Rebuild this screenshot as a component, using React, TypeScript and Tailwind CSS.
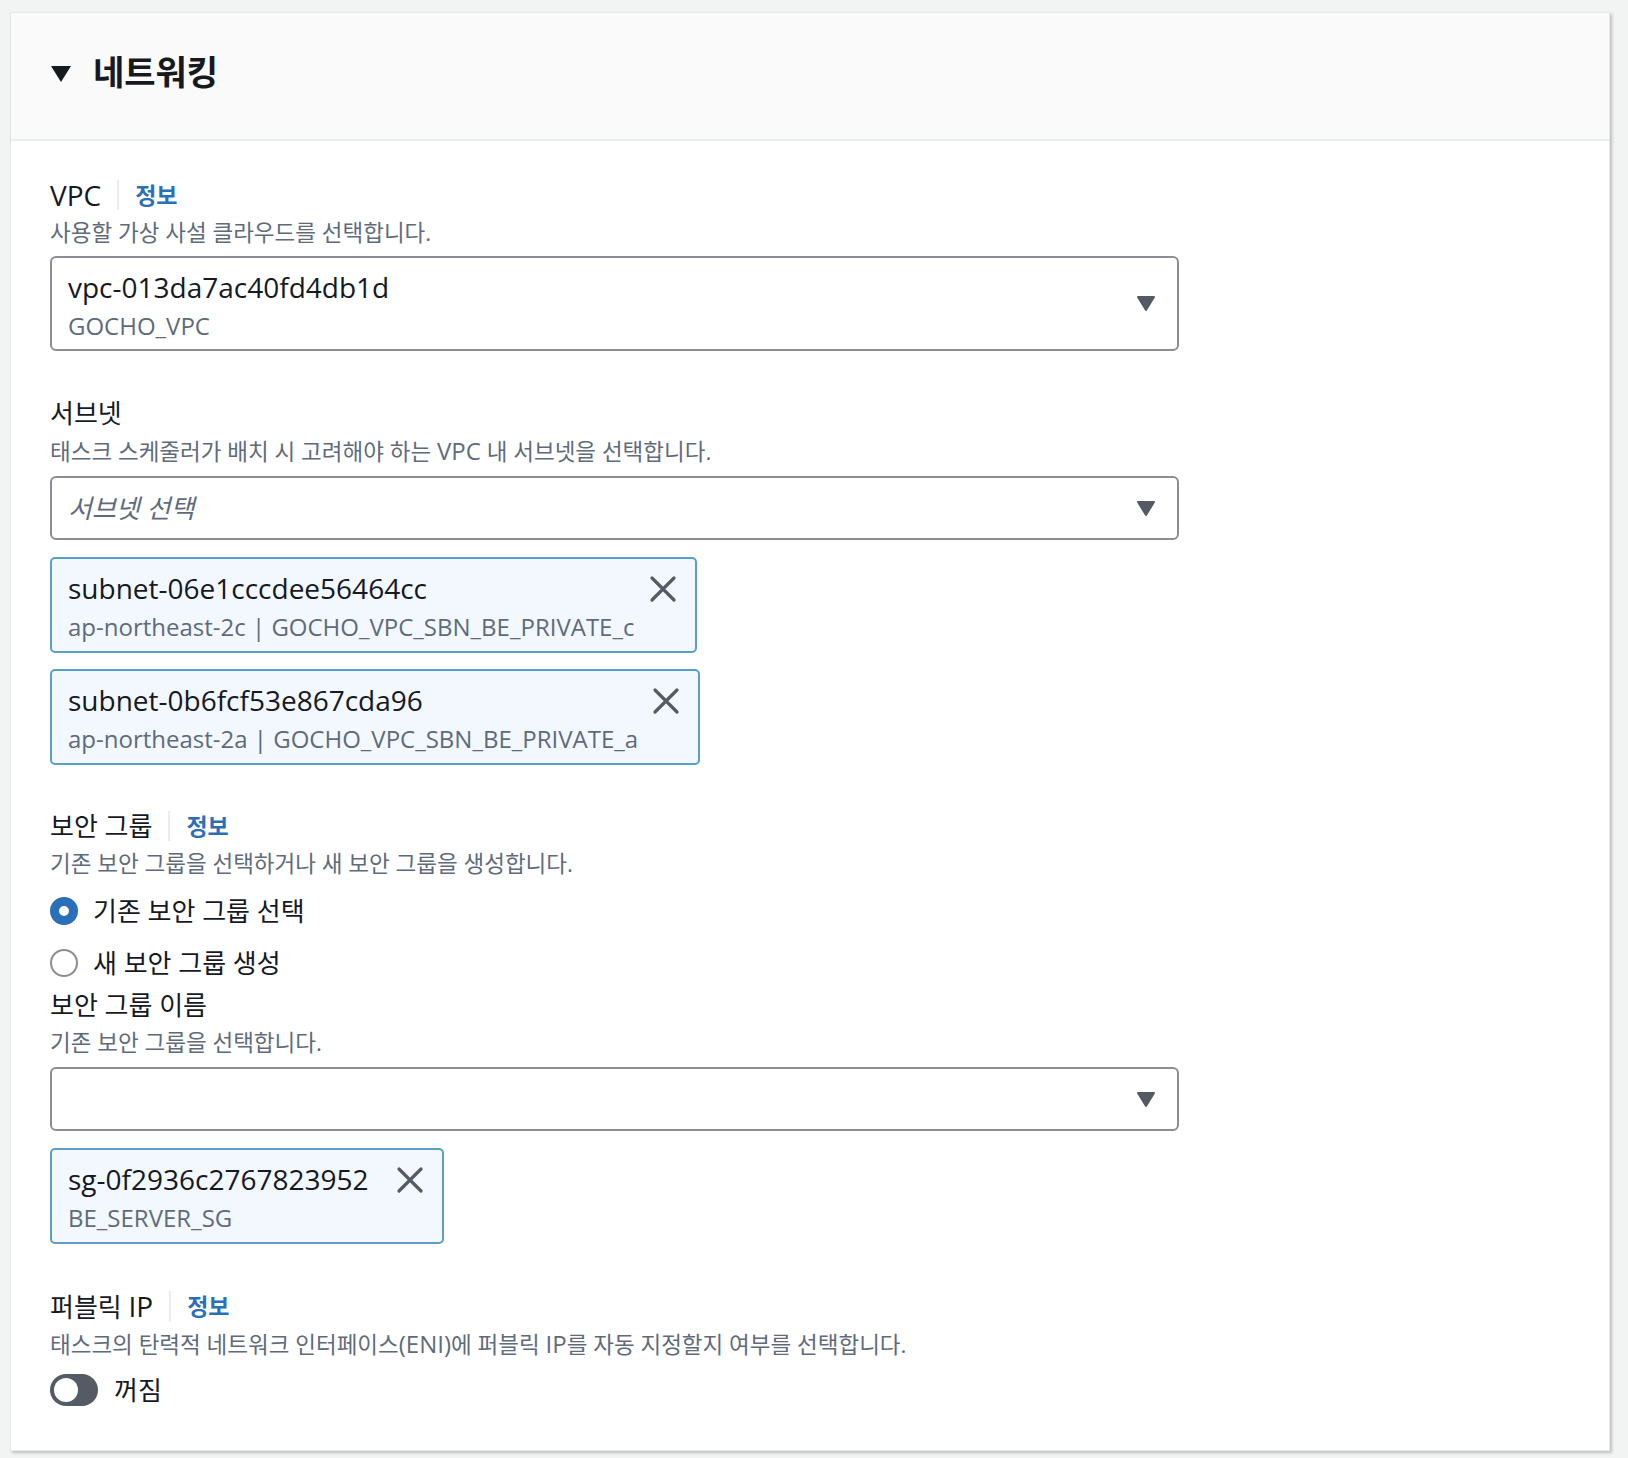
import React from 'react';

const FONT = { fontFamily: '"Open Sans", "Noto Sans CJK KR", sans-serif' };

const Caret: React.FC = () => (
  <svg width="20" height="17" viewBox="0 0 20 17" className="shrink-0">
    <path d="M2 2h16L10 15z" fill="#545b64" stroke="#545b64" strokeWidth="2" strokeLinejoin="round" />
  </svg>
);

const Close: React.FC = () => (
  <svg width="28" height="28" viewBox="0 0 28 28" className="shrink-0">
    <path d="M3 3L25 25M25 3L3 25" stroke="#545b64" strokeWidth="3.2" strokeLinecap="round" />
  </svg>
);

const Info: React.FC = () => (
  <>
    <span className="mx-[16px] w-[2px] h-[30px] bg-[#eaeded]" />
    <span className="text-[23px] font-bold text-[#2a6fb8] cursor-pointer">정보</span>
  </>
);

const Label: React.FC<{ children: React.ReactNode; info?: boolean; className?: string }> = ({ children, info, className = '' }) => (
  <div className={`flex items-center h-[32px] text-[26px] leading-[32px] text-[#16191f] ${className}`}>
    <span>{children}</span>
    {info && <Info />}
  </div>
);

const Desc: React.FC<{ children: React.ReactNode }> = ({ children }) => (
  <p className="mt-[7px] text-[22.5px] leading-[30px] text-[#5f6b7a] whitespace-nowrap">{children}</p>
);

const Chip: React.FC<{ id: string; sub: string; width: string; className?: string }> = ({ id, sub, width, className = '' }) => (
  <div className={`flex items-start justify-between ${width} h-[96px] border-2 border-[#5a9fc7] bg-[#f2f8fd] rounded-[5px] pl-[16px] pr-[18px] pt-[11px] ${className}`}>
    <div className="flex flex-col whitespace-nowrap">
      <span className="text-[28px] leading-[36px] text-[#16191f]">{id}</span>
      <span className="mt-[4px] text-[24px] leading-[34px] text-[#5f6b7a]">{sub}</span>
    </div>
    <div className="pt-[5px]">
      <Close />
    </div>
  </div>
);

const App: React.FC = () => {
  return (
    <div className="w-[1628px] h-[1458px] bg-[#f2f3f3] pt-[12px] pl-[10px]" style={FONT}>
      <div className="w-[1600px] h-[1439px] bg-white border border-[#e6e7e8] shadow-[2px_2px_3px_rgba(0,0,0,0.22)]">
        {/* Header */}
        <div className="flex items-center h-[128px] bg-[#fafafa] border-b-2 border-[#eaeded] pl-[39px] pb-[9px]">
          <svg width="22" height="18" viewBox="0 0 22 18" className="mr-[21px] mt-[4px]">
            <path d="M1 1h20L11 17z" fill="#16191f" />
          </svg>
          <h2 className="text-[34px] font-bold leading-[40px] text-[#16191f]">네트워킹</h2>
        </div>

        <div className="pl-[39px] pt-[38px]">
          {/* VPC */}
          <Label info>
            <span className="text-[28px]">VPC</span>
          </Label>
          <Desc>사용할 가상 사설 클라우드를 선택합니다.</Desc>
          <div className="mt-[8px] w-[1129px] h-[95px] border-2 border-[#8c8c94] rounded-[6px] flex items-center justify-between pl-[16px] pr-[21px]">
            <div className="flex flex-col pt-[4px]">
              <span className="text-[28px] leading-[36px] text-[#16191f]">vpc-013da7ac40fd4db1d</span>
              <span className="mt-[4px] text-[24px] leading-[34px] text-[#5f6b7a]">GOCHO_VPC</span>
            </div>
            <Caret />
          </div>

          {/* Subnets */}
          <Label className="mt-[46px]">서브넷</Label>
          <Desc>
            태스크 스케줄러가 배치 시 고려해야 하는 <span className="text-[24px]">VPC</span> 내 서브넷을 선택합니다.
          </Desc>
          <div className="mt-[9px] w-[1129px] h-[64px] border-2 border-[#8c8c94] rounded-[6px] flex items-center justify-between pl-[16px] pr-[21px]">
            <span className="text-[26px] italic text-[#5f6b7a]">서브넷 선택</span>
            <Caret />
          </div>
          <Chip
            className="mt-[17px]"
            width="w-[647px]"
            id="subnet-06e1cccdee56464cc"
            sub="ap-northeast-2c | GOCHO_VPC_SBN_BE_PRIVATE_c"
          />
          <Chip
            className="mt-[16px]"
            width="w-[650px]"
            id="subnet-0b6fcf53e867cda96"
            sub="ap-northeast-2a | GOCHO_VPC_SBN_BE_PRIVATE_a"
          />

          {/* Security group */}
          <Label className="mt-[45px]" info>
            보안 그룹
          </Label>
          <Desc>기존 보안 그룹을 선택하거나 새 보안 그룹을 생성합니다.</Desc>
          <div className="mt-[16px] flex flex-col gap-[20px]">
            <label className="flex items-center h-[32px] gap-[15px] text-[26px] text-[#16191f]">
              <span className="w-[28px] h-[28px] rounded-full border-[9px] border-[#2a6fb8] bg-white" />
              기존 보안 그룹 선택
            </label>
            <label className="flex items-center h-[32px] gap-[15px] text-[26px] text-[#16191f]">
              <span className="w-[28px] h-[28px] rounded-full border-2 border-[#8c8c94] bg-white" />
              새 보안 그룹 생성
            </label>
          </div>
          <Label className="mt-[10px]">보안 그룹 이름</Label>
          <Desc>기존 보안 그룹을 선택합니다.</Desc>
          <div className="mt-[9px] w-[1129px] h-[64px] border-2 border-[#8c8c94] rounded-[6px] flex items-center justify-end pr-[21px]">
            <Caret />
          </div>
          <Chip className="mt-[17px]" width="w-[394px]" id="sg-0f2936c2767823952" sub="BE_SERVER_SG" />

          {/* Public IP */}
          <Label className="mt-[46px]" info>
            퍼블릭 <span className="text-[28px]">IP</span>
          </Label>
          <Desc>
            태스크의 탄력적 네트워크 인터페이스<span className="text-[24px]">(ENI)</span>에 퍼블릭{' '}
            <span className="text-[24px]">IP</span>를 자동 지정할지 여부를 선택합니다.
          </Desc>
          <div className="mt-[14px] flex items-center gap-[16px]">
            <span className="w-[48px] h-[32px] rounded-full bg-[#545b64] flex items-center pl-[4px]">
              <span className="w-[24px] h-[24px] rounded-full bg-white" />
            </span>
            <span className="text-[26px] leading-[32px] text-[#16191f]">꺼짐</span>
          </div>
        </div>
      </div>
    </div>
  );
};

export default App;
